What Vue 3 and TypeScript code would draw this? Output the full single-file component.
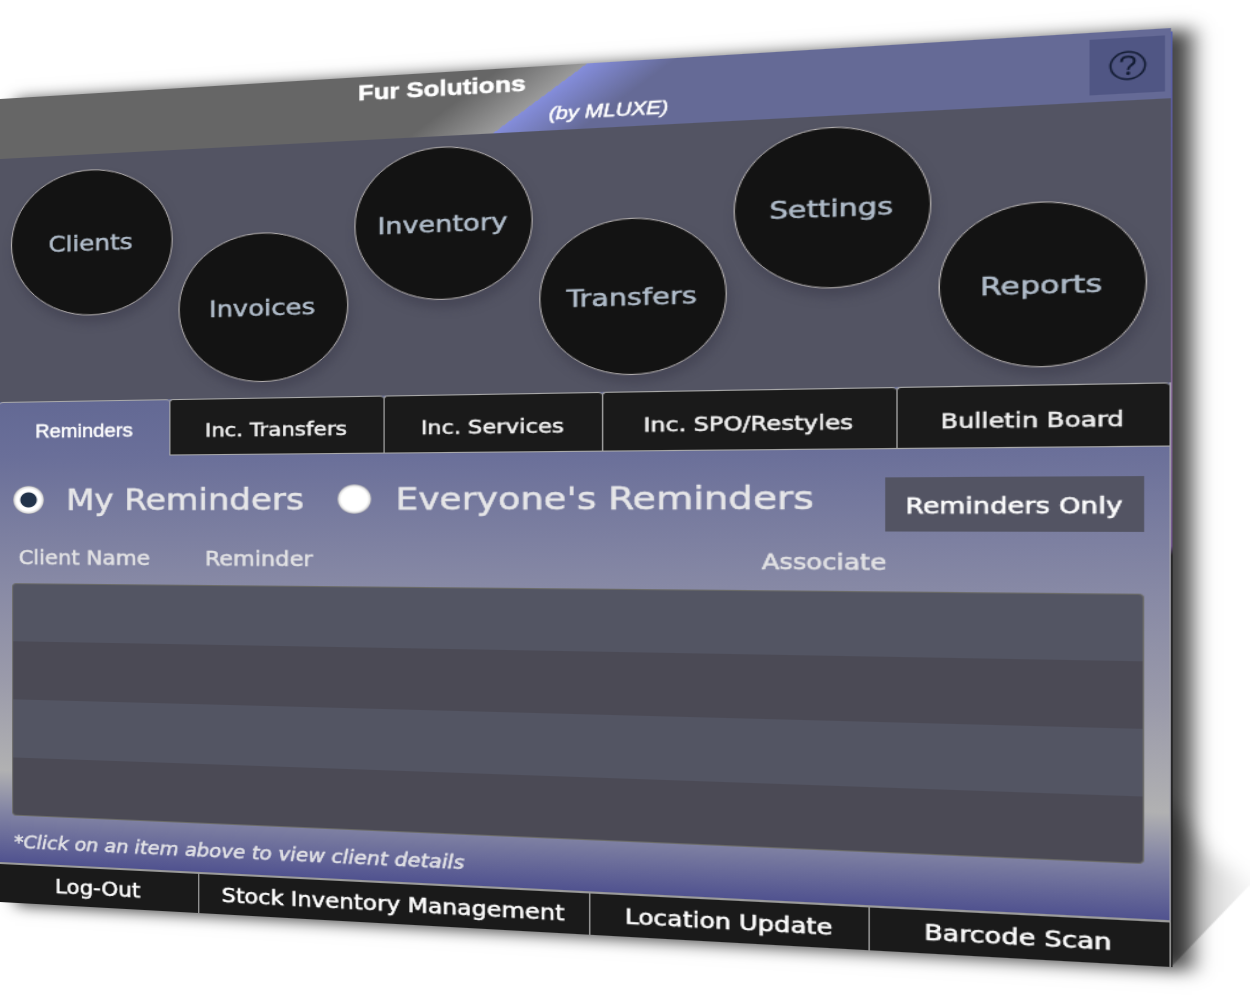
<script setup lang="ts">
import { ref } from 'vue'

interface Dial {
  label: string
  level: 'high' | 'mid' | 'low'
}

const dials: Dial[] = [
  { label: 'Clients', level: 'mid' },
  { label: 'Invoices', level: 'low' },
  { label: 'Inventory', level: 'high' },
  { label: 'Transfers', level: 'low' },
  { label: 'Settings', level: 'high' },
  { label: 'Reports', level: 'low' },
]

const tabs: string[] = ['Reminders', 'Inc. Transfers', 'Inc. Services', 'Inc. SPO/Restyles', 'Bulletin Board']
const actions: string[] = ['Log-Out', 'Stock Inventory Management', 'Location Update', 'Barcode Scan']
const columns: string[] = ['Client Name', 'Reminder', 'Associate']

const activeTab = ref(0)
const scope = ref<'mine' | 'all'>('mine')
</script>

<template>
  <div class="stage">
    <main class="panel">
      <header class="header">
        <h1 class="title">Fur Solutions</h1>
        <p class="byline">(by MLUXE)</p>
        <button class="help" type="button" aria-label="Help">
          <svg viewBox="0 0 24 24" width="26" height="26" fill="none" stroke="#111a30" stroke-width="1.3">
            <circle cx="12" cy="12" r="10.8" />
            <path d="M8 9C8 6.600 9.700 5 12.100 5s4 1.500 4 3.700c0 1.500-.8 2.300-2 3.200-1.400 1.100-1.900 1.700-1.900 3.500" stroke-width="1.700" />
            <circle cx="12.200" cy="18.200" r="1.300" fill="#111a30" stroke="none" />
          </svg>
        </button>
      </header>

      <nav class="dials">
        <button v-for="d in dials" :key="d.label" type="button" class="dial" :class="d.level">{{ d.label }}</button>
      </nav>

      <section class="body">
        <div class="tabs" role="tablist">
          <button
            v-for="(t, i) in tabs"
            :key="t"
            type="button"
            role="tab"
            class="tab"
            :class="{ active: i === activeTab }"
            :aria-selected="i === activeTab"
            @click="activeTab = i"
          >{{ t }}</button>
        </div>

        <div class="filters">
          <label class="choice"><input v-model="scope" type="radio" name="scope" value="mine" />My Reminders</label>
          <label class="choice"><input v-model="scope" type="radio" name="scope" value="all" />Everyone's Reminders</label>
          <button type="button" class="only">Reminders Only</button>
        </div>

        <div class="list">
          <table>
            <colgroup><col class="c-name" /><col /><col class="c-associate" /></colgroup>
            <thead>
              <tr><th v-for="c in columns" :key="c" scope="col">{{ c }}</th></tr>
            </thead>
            <tbody>
              <tr v-for="r in 4" :key="r"><td v-for="c in columns" :key="c"></td></tr>
            </tbody>
          </table>
        </div>
        <p class="note">*Click on an item above to view client details</p>
      </section>

      <footer class="footer">
        <button v-for="a in actions" :key="a" type="button" class="action">{{ a }}</button>
      </footer>

      <svg class="curl" viewBox="0 0 52 220" aria-hidden="true">
        <defs>
          <linearGradient id="curl-fade" gradientUnits="userSpaceOnUse" x1="0" y1="0" x2="52" y2="0">
            <stop offset="0" stop-color="#000" stop-opacity="0.3" />
            <stop offset="0.3" stop-color="#000" stop-opacity="0.24" />
            <stop offset="0.55" stop-color="#000" stop-opacity="0.14" />
            <stop offset="1" stop-color="#000" stop-opacity="0.03" />
          </linearGradient>
          <filter id="curl-soft" x="-50%" y="-20%" width="200%" height="140%">
            <feGaussianBlur stdDeviation="8" />
          </filter>
          <clipPath id="curl-cut"><path d="M0 0H52V147L0 220Z" /></clipPath>
        </defs>
        <g clip-path="url(#curl-cut)">
          <path d="M-40 50L4 90L26 125L80 165V180L0 260H-40Z" fill="url(#curl-fade)" filter="url(#curl-soft)" />
        </g>
      </svg>
    </main>
  </div>
</template>

<style>
body {
  margin: 0;
  background: #fff;
}
</style>

<style scoped>
.stage {
  box-sizing: border-box;
  min-height: 100vh;
  padding-top: 99px;
  overflow: hidden;
  background: #fff;
  font-family: 'DejaVu Sans', Verdana, sans-serif;
}

/* The whole board is tilted in space, its right side nearer to the viewer. */
.panel {
  position: relative;
  width: 73.2%;
  background: #535463;
  box-shadow: 14px 2px 14px rgba(0, 0, 0, 0.74);
  transform-origin: 0 0;
  transform: matrix3d(1.0944, -0.06635, 0, -0.0001583, 0, 1, 0, 0, 0, 0, 1, 0, 0, 0, 0, 1);
  -webkit-text-stroke: 0.5px currentColor;
}

.panel::after {
  content: '';
  position: absolute;
  top: 3px;
  bottom: 0;
  left: 100%;
  width: 1px;
  background: linear-gradient(#5660b0 0%, #6a5a9a 20%, #8a6a9a 35%, #6a4a8a 55%, #111 56%, #111 100%);
}

button {
  margin: 0;
  padding: 0;
  border: 0;
  background: none;
  color: inherit;
  font-family: inherit;
  cursor: pointer;
}

.header {
  display: flex;
  height: 60px;
  background: linear-gradient(141deg, #666 43%, #9a9a9a 50%, #848ddb 50%, #656a96 57%);
  color: #fff;
  font-family: 'Liberation Sans', Arial, sans-serif;
}

.title {
  margin: 3px 0 0 34%;
  font-size: 21px;
  line-height: 24px;
  font-weight: 700;
}

.byline {
  margin: 35px 0 0 18px;
  font-size: 17px;
  line-height: 20px;
  font-style: italic;
}

.help {
  display: flex;
  align-items: center;
  justify-content: center;
  width: 51px;
  height: 48px;
  margin: 6px 4px 0 auto;
  background: #505684;
}

.dials {
  display: flex;
  justify-content: center;
  gap: 5px;
  height: 243px;
  padding-right: 7px;
}

.dial {
  box-sizing: border-box;
  flex: none;
  width: 144px;
  height: 144px;
  border: 1px solid #b4b0b0;
  border-radius: 50%;
  background: #131313;
  box-shadow: 2px 8px 8px rgba(60, 60, 75, 0.5);
  color: #b1bdcb;
  font-size: 22px;
}

.high {
  margin-top: 10px;
}

.mid {
  margin-top: 15px;
}

.low {
  margin-top: 84px;
}

.body {
  box-sizing: border-box;
  border-right: 1px solid #a5a5ad;
  background: linear-gradient(#636994 0%, #6a6f99 12%, #8789a5 39%, #9a9aaa 60%, #b1b1b2 80%, #8284a4 89%, #50528f 100%);
}

.tabs {
  display: grid;
  grid-template-columns: 151fr 181fr 174fr 219fr 189fr;
  height: 55px;
}

.tab {
  box-sizing: border-box;
  padding-top: 6px;
  border: 1px solid #aaa;
  border-right-width: 0;
  border-radius: 3px 3px 0 0;
  background: #1a1a1a;
  color: #f2f2f2;
  font-size: 18px;
  white-space: nowrap;
}

.tab.active {
  border-bottom-color: transparent;
  border-left: 0;
  background: none;
  color: #fff;
  font-family: 'Liberation Sans', Arial, sans-serif;
}

.filters {
  display: flex;
  align-items: flex-start;
  height: 48px;
  padding: 25px 17px 0 12px;
}

.choice {
  display: flex;
  align-items: center;
  height: 36px;
  margin-right: 28px;
  color: #e6e6e8;
  font-size: 29px;
  white-space: nowrap;
}

.choice input {
  appearance: none;
  width: 28px;
  height: 28px;
  margin: 0 20px 0 0;
  border-radius: 50%;
  background: radial-gradient(circle, #fff 11px, #dcdcdc 13px, #9a9aa5 14px);
}

.choice input:checked {
  background: radial-gradient(circle, #22334a 7px, #fff 8px, #fff 11px, #dcdcdc 13px, #9a9aa5 14px);
}

.only {
  width: 180px;
  height: 48px;
  margin-left: auto;
  padding-top: 2px;
  background: #535463;
  color: #fff;
  font-size: 19px;
  white-space: nowrap;
}

.list {
  padding: 0 17px 0 11px;
}

table {
  width: 100%;
  table-layout: fixed;
  border-spacing: 0;
}

.c-name {
  width: 165px;
}

.c-associate {
  width: 276px;
}

th {
  height: 53px;
  padding: 0 6px;
  color: #e2e2e4;
  font-size: 19px;
  font-weight: 400;
  text-align: left;
}

td {
  box-sizing: border-box;
  height: 58px;
  padding: 0;
  border: 0 solid #6b6b68;
  background: #535563;
}

tbody tr:nth-child(even) td {
  background: #4b4a55;
}

td:first-child {
  border-left-width: 1px;
}

td:last-child {
  border-right-width: 1px;
}

tbody tr:first-child td {
  border-top-width: 1px;
}

tbody tr:last-child td {
  border-bottom-width: 1px;
}

tbody tr:first-child td:first-child {
  border-top-left-radius: 4px;
}

tbody tr:first-child td:last-child {
  border-top-right-radius: 4px;
}

tbody tr:last-child td:first-child {
  border-bottom-left-radius: 4px;
}

tbody tr:last-child td:last-child {
  border-bottom-right-radius: 4px;
}

.note {
  margin: 0;
  padding: 6px 0 0 13px;
  color: #e2e2e6;
  font-size: 17px;
  font-style: italic;
  line-height: 41px;
}

.footer {
  display: grid;
  grid-template-columns: 176fr 321fr 209fr 209fr;
  box-sizing: border-box;
  height: 40px;
  border-top: 2px solid #9a9a9a;
  border-right: 1px solid #a8a8a8;
  background: #1a1a1a;
}

.action {
  color: #fff;
  font-size: 19px;
  white-space: nowrap;
}

.action + .action {
  border-left: 1px solid #aaa;
}

.curl {
  position: absolute;
  z-index: -1;
  left: 100%;
  bottom: 0;
  width: 52px;
  height: 220px;
}
</style>
